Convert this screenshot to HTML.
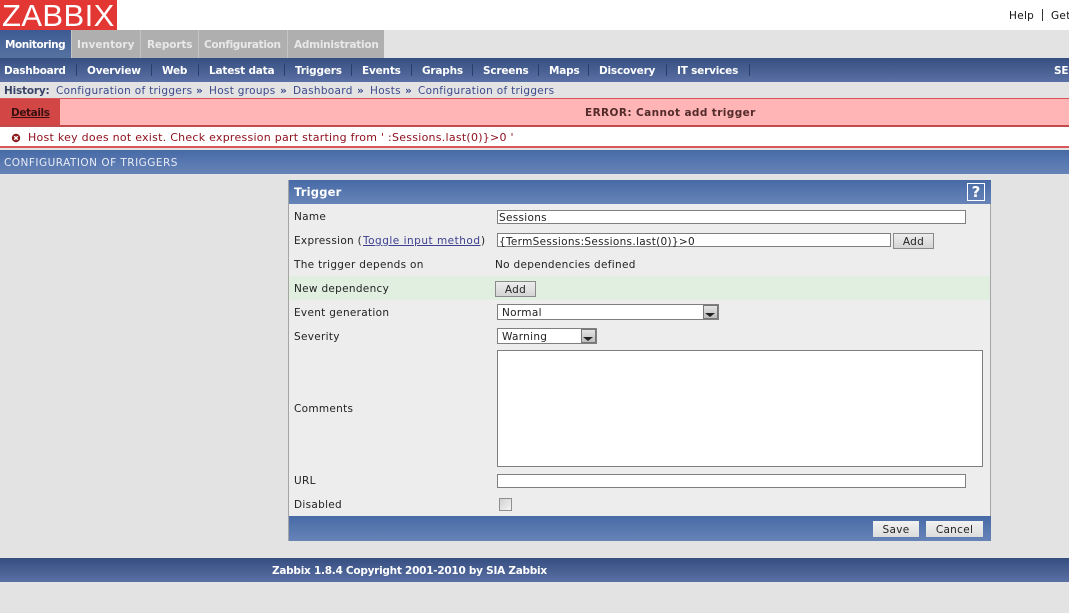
<!DOCTYPE html>
<html><head><meta charset="utf-8"><style>
html,body{margin:0;padding:0;width:1069px;height:613px;overflow:hidden;background:#e3e3e3;font-family:"DejaVu Sans","Liberation Sans",sans-serif;font-size:10.5px;color:#222;letter-spacing:.3px}
div,span,a{position:absolute;white-space:nowrap;display:block}
.t{line-height:16px;height:16px}
.b{font-weight:bold;letter-spacing:-.2px}
.w{color:#fff}
.nav{background:linear-gradient(#354e80,#5b70a4)}
.blue{background:linear-gradient(#476aa6,#6784b8)}
.tab{top:30px;height:28px;background:#afafaf;border-left:1px solid #c4c4c4;box-sizing:border-box}
.tt{color:#e8e8e8;font-weight:bold;top:37px;letter-spacing:-.1px}
.s{top:64px;width:1px;height:12px;background:#2a3f6b}
.in{background:#fff;border:1px solid #7f7f7f;box-sizing:border-box}
.btn{background:linear-gradient(#ededed,#d4d4d4);border:1px solid #8a8a8a;box-sizing:border-box;text-align:center;color:#222}
.h{color:#3c4a8c}
.arr{width:0;height:0;border-left:5px solid transparent;border-right:5px solid transparent;border-top:4px solid #222}
.sb{background:linear-gradient(#e4e4e4,#bdbdbd);width:15px;top:0;bottom:0;right:0;border:1px solid #777;box-sizing:border-box}
</style></head><body>
<div style="left:0;top:0;width:1069px;height:30px;background:#fff"></div>
<div style="left:0;top:0;width:117px;height:30px;background:#e33734"></div>
<div style="left:2px;top:0;color:#fff;font-family:'Liberation Sans',sans-serif;font-size:31px;line-height:31px;letter-spacing:.4px">ZABBIX</div>
<div class="t" style="left:1009px;top:8px;color:#111">Help</div>
<div style="left:1042px;top:9px;width:1px;height:12px;background:#333"></div>
<div class="t" style="left:1051px;top:8px;color:#111">Get</div>

<div style="left:0;top:30px;width:71px;height:28px;background:linear-gradient(#3d5a94,#54709f 90%)"></div>
<div class="tab" style="left:71px;width:69px"></div>
<div class="tab" style="left:140px;width:58px"></div>
<div class="tab" style="left:198px;width:89px"></div>
<div class="tab" style="left:287px;width:97px"></div>
<div class="t b w" style="left:5px;top:37px;letter-spacing:-.45px">Monitoring</div>
<div class="t tt" style="left:77px;letter-spacing:.05px">Inventory</div>
<div class="t tt" style="left:147px;letter-spacing:-.15px">Reports</div>
<div class="t tt" style="left:204px;letter-spacing:-.35px">Configuration</div>
<div class="t tt" style="left:294px;letter-spacing:-.25px">Administration</div>

<div class="nav" style="left:0;top:58px;width:1069px;height:24px"></div>
<div class="t b w" style="left:4px;top:63px;letter-spacing:-.27px">Dashboard</div><div class="s" style="left:76px"></div>
<div class="t b w" style="left:87px;top:63px">Overview</div><div class="s" style="left:151px"></div>
<div class="t b w" style="left:162px;top:63px">Web</div><div class="s" style="left:198px"></div>
<div class="t b w" style="left:209px;top:63px">Latest data</div><div class="s" style="left:284px"></div>
<div class="t b w" style="left:295px;top:63px">Triggers</div><div class="s" style="left:351px"></div>
<div class="t b w" style="left:362px;top:63px">Events</div><div class="s" style="left:411px"></div>
<div class="t b w" style="left:422px;top:63px">Graphs</div><div class="s" style="left:472px"></div>
<div class="t b w" style="left:483px;top:63px">Screens</div><div class="s" style="left:538px"></div>
<div class="t b w" style="left:549px;top:63px">Maps</div><div class="s" style="left:588px"></div>
<div class="t b w" style="left:599px;top:63px">Discovery</div><div class="s" style="left:666px"></div>
<div class="t b w" style="left:677px;top:63px">IT services</div><div class="s" style="left:749px"></div>
<div class="t b w" style="left:1054px;top:63px">SE</div>

<div class="t b" style="left:4px;top:83px;color:#3a4468">History:</div>
<div class="t h" style="left:56px;top:83px">Configuration of triggers</div>
<div class="t b h" style="left:196px;top:83px">»</div>
<div class="t h" style="left:209px;top:83px">Host groups</div>
<div class="t b h" style="left:280px;top:83px">»</div>
<div class="t h" style="left:293px;top:83px">Dashboard</div>
<div class="t b h" style="left:357px;top:83px">»</div>
<div class="t h" style="left:370px;top:83px">Hosts</div>
<div class="t b h" style="left:405px;top:83px">»</div>
<div class="t h" style="left:418px;top:83px">Configuration of triggers</div>

<div style="left:0;top:98px;width:1069px;height:27px;background:#ffb5b5;border-top:1px solid #d8565a;box-sizing:border-box"></div>
<div style="left:0;top:99px;width:60px;height:26px;background:#d24646"></div>
<div style="left:0;top:125px;width:1069px;height:2px;background:#c14a4a"></div>
<div class="t b" style="left:11px;top:105px;color:#3a0f0f;text-decoration:underline;letter-spacing:-.4px">Details</div>
<div class="t b" style="left:585px;top:105px;color:#522a2a;letter-spacing:.4px">ERROR: Cannot add trigger</div>
<div style="left:0;top:127px;width:1069px;height:21px;background:#fff;border-bottom:2px solid #d8585a;box-sizing:border-box"></div>
<svg style="position:absolute;left:11px;top:133px" width="10" height="10" viewBox="0 0 10 10"><circle cx="5" cy="5" r="4.2" fill="#8c1c1c"/><path d="M3.2 3.2L6.8 6.8M6.8 3.2L3.2 6.8" stroke="#fff" stroke-width="1.4"/></svg>
<div class="t" style="left:28px;top:130px;color:#8d0f1d;font-size:11px;letter-spacing:.26px">Host key does not exist. Check expression part starting from ' :Sessions.last(0)}&gt;0 '</div>

<div class="blue" style="left:0;top:150px;width:1069px;height:24px"></div>
<div class="t" style="left:4px;top:155px;color:#e8ecf5;letter-spacing:.48px">CONFIGURATION OF TRIGGERS</div>

<div style="left:288px;top:180px;width:703px;height:361px;background:#ededed;border:1px solid #a5a5a5;box-sizing:border-box"></div>
<div class="blue" style="left:289px;top:180px;width:702px;height:24px"></div>
<div class="t b w" style="left:294px;top:184px;font-size:11.5px;letter-spacing:.2px">Trigger</div>
<div style="left:967px;top:183px;width:18px;height:18px;border:1px solid #fff;box-sizing:border-box;color:#fff;font-weight:bold;font-size:15px;line-height:16px;text-align:center;letter-spacing:0">?</div>
<div style="left:289px;top:276px;width:701px;height:24px;background:#e1efe1"></div>

<div class="t" style="left:294px;top:209px">Name</div>
<div class="in" style="left:497px;top:210px;width:469px;height:14px"></div>
<div class="t" style="left:499px;top:210px">Sessions</div>

<div class="t" style="left:294px;top:233px">Expression (</div>
<div class="t" style="left:363px;top:233px;color:#3c3f8f;text-decoration:underline;letter-spacing:.5px">Toggle input method</div>
<div class="t" style="left:481px;top:233px">)</div>
<div class="in" style="left:497px;top:233px;width:394px;height:14px"></div>
<div class="t" style="left:499px;top:234px">{TermSessions:Sessions.last(0)}&gt;0</div>
<div class="btn t" style="left:893px;top:233px;width:41px;height:16px;line-height:17px">Add</div>

<div class="t" style="left:294px;top:257px">The trigger depends on</div>
<div class="t" style="left:495px;top:257px">No dependencies defined</div>

<div class="t" style="left:294px;top:281px">New dependency</div>
<div class="btn t" style="left:495px;top:281px;width:41px;height:16px;line-height:17px">Add</div>

<div class="t" style="left:294px;top:305px">Event generation</div>
<div class="in" style="left:497px;top:304px;width:222px;height:16px"><div class="sb"></div><div class="arr" style="right:3px;top:8px"></div></div>
<div class="t" style="left:502px;top:305px">Normal</div>

<div class="t" style="left:294px;top:329px">Severity</div>
<div class="in" style="left:497px;top:328px;width:100px;height:16px"><div class="sb"></div><div class="arr" style="right:3px;top:8px"></div></div>
<div class="t" style="left:502px;top:329px">Warning</div>

<div class="in" style="left:497px;top:350px;width:486px;height:117px"></div>
<div class="t" style="left:294px;top:401px">Comments</div>

<div class="t" style="left:294px;top:473px">URL</div>
<div class="in" style="left:497px;top:474px;width:469px;height:14px"></div>

<div class="t" style="left:294px;top:497px">Disabled</div>
<div style="left:499px;top:498px;width:13px;height:13px;border:1px solid #8e8e8e;background:linear-gradient(135deg,#d0d0d0,#f4f4f4);box-sizing:border-box"></div>

<div class="blue" style="left:289px;top:516px;width:702px;height:25px"></div>
<div class="btn t" style="left:873px;top:521px;width:46px;height:16px;line-height:19px;border:none;background:linear-gradient(#f2f2f2,#dcdcdc)">Save</div>
<div class="btn t" style="left:926px;top:521px;width:57px;height:16px;line-height:19px;border:none;background:linear-gradient(#f2f2f2,#dcdcdc)">Cancel</div>

<div class="nav" style="left:0;top:558px;width:1069px;height:24px"></div>
<div class="t b w" style="left:272px;top:563px;letter-spacing:-.26px">Zabbix 1.8.4 Copyright 2001-2010 by SIA Zabbix</div>
</body></html>
